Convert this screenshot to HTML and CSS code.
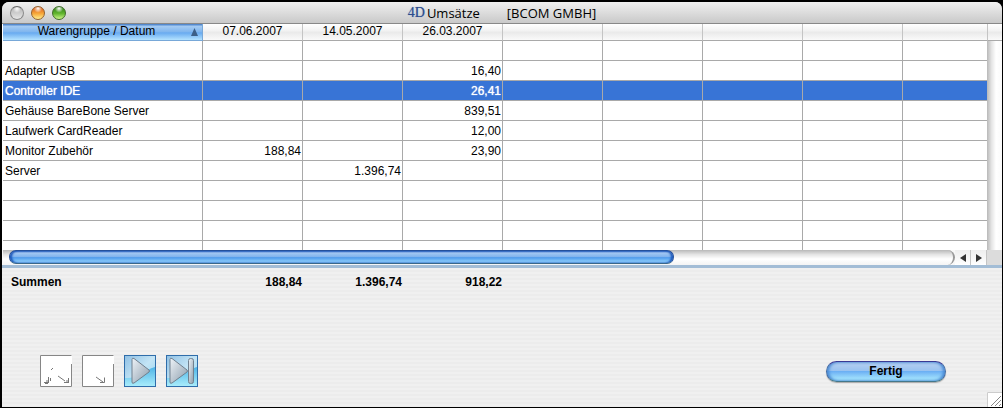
FILE: index.html
```
<!DOCTYPE html>
<html lang="de">

<head>
    <meta charset="UTF-8">
    <meta name="viewport" content="width=device-width, initial-scale=1.0">
    <title>Umsätze [BCOM GMBH]</title>
    <link rel="stylesheet" href="styles.css">
</head>

<body>
    <div class="window">
        <header class="titlebar">
            <div class="lights">
                <button type="button" class="light" aria-label="Schließen"></button>
                <button type="button" class="light orange" aria-label="Minimieren"></button>
                <button type="button" class="light green" aria-label="Maximieren"></button>
            </div>
            <h1>
                <span class="logo">4D</span>
                <span>Umsätze</span>
                <span class="customer">[BCOM GMBH]</span>
            </h1>
        </header>

        <div class="list">
            <div class="rows">
                <table class="grid">
                    <colgroup>
                        <col class="group"><col class="day"><col class="day"><col class="day"><col class="day">
                        <col class="day"><col class="day"><col class="day"><col>
                    </colgroup>
                    <thead>
                        <tr>
                            <th class="sorted" aria-sort="ascending">Warengruppe / Datum
                                <svg class="arrow" width="7" height="8" viewBox="0 0 7 8"><path d="M3.5 0L7 8H0z" fill="#3c5f87"/></svg>
                            </th>
                            <th>07.06.2007</th>
                            <th>14.05.2007</th>
                            <th>26.03.2007</th>
                            <th></th><th></th><th></th><th></th><th></th>
                        </tr>
                    </thead>
                    <tbody id="salesRows"></tbody>
                </table>
            </div>
            <div class="vscroll">
                <div class="vscroll-head"></div>
                <div class="vscroll-track"></div>
            </div>
        </div>

        <div class="hscroll">
            <div class="track"><div class="thumb"></div></div>
            <button type="button" class="step" aria-label="Nach links"><svg width="6" height="8" viewBox="0 0 6 8"><path d="M6 0v8L0 4z" fill="#333"/></svg></button>
            <button type="button" class="step" aria-label="Nach rechts"><svg width="6" height="8" viewBox="0 0 6 8"><path d="M0 0v8l6-4z" fill="#333"/></svg></button>
            <div class="corner"></div>
        </div>

        <footer class="panel">
            <table class="sums">
                <colgroup>
                    <col class="group"><col class="day"><col class="day"><col class="day"><col>
                </colgroup>
                <tr>
                    <th>Summen</th>
                    <td>188,84</td>
                    <td>1.396,74</td>
                    <td>918,22</td>
                    <td></td>
                </tr>
            </table>
            <div class="actions">
                <button type="button" class="nav off" aria-label="Erster">
                    <svg width="32" height="32" viewBox="0 0 32 32">
                        <path d="M.5 31.5V.5h31M.5 31.5h31V9" fill="none" stroke="#868686"/>
                        <path d="M11 15l2-2M18 21l7 5M24 27.5h4M28.500 23v5M26 26h2M8.500 22v5M10.500 23v3M4 27.500h5M6 26h3M5 28.500h3" fill="none" stroke="#777"/>
                    </svg>
                </button>
                <button type="button" class="nav off" aria-label="Zurück">
                    <svg width="32" height="32" viewBox="0 0 32 32">
                        <path d="M.5 31.5V.5h31M.5 31.5h31V9" fill="none" stroke="#868686"/>
                        <path d="M14 22l7 5M22.500 22.500v5H18" fill="none" stroke="#777"/>
                    </svg>
                </button>
                <button type="button" class="nav" aria-label="Weiter">
                    <svg width="32" height="32" viewBox="0 0 32 32">
                        <defs>
                            <linearGradient id="sky" x1="0" y1="0" x2="1" y2="1">
                                <stop offset="0" stop-color="#8fc0e4"/>
                                <stop offset=".5" stop-color="#c3e4f5"/>
                                <stop offset="1" stop-color="#8fd4f2"/>
                            </linearGradient>
                            <linearGradient id="wave" x1="0" y1="0" x2="0" y2="1">
                                <stop offset="0" stop-color="#4fb4e6"/>
                                <stop offset="1" stop-color="#a8ecfb"/>
                            </linearGradient>
                            <linearGradient id="steel" x1="0" y1="0" x2="1" y2="1">
                                <stop offset="0" stop-color="#eef3f8"/>
                                <stop offset="1" stop-color="#8b9cab"/>
                            </linearGradient>
                        </defs>
                        <rect x=".5" y=".5" width="31" height="31" fill="url(#sky)"/>
                        <path d="M1 23C14 24 20 15 31 12v19H1z" fill="url(#wave)"/>
                        <rect x=".5" y=".5" width="31" height="31" fill="none" stroke="#2f6daa"/>
                        <path d="M8 4.500Q8 2.500 10 3.500L25 15q1 1 0 2L10 28Q8 29 8 27z" fill="url(#steel)" stroke="#71808e"/>
                    </svg>
                </button>
                <button type="button" class="nav" aria-label="Letzter">
                    <svg width="32" height="32" viewBox="0 0 32 32">
                        <rect x=".5" y=".5" width="31" height="31" fill="url(#sky)"/>
                        <path d="M1 23C14 24 20 15 31 12v19H1z" fill="url(#wave)"/>
                        <rect x=".5" y=".5" width="31" height="31" fill="none" stroke="#2f6daa"/>
                        <path d="M4 4.500Q4 2.500 6 3.500L21 15q1 1 0 2L6 28Q4 29 4 27z" fill="url(#steel)" stroke="#71808e"/>
                        <rect x="22.500" y="3.500" width="5" height="25" rx="2" fill="url(#steel)" stroke="#71808e"/>
                    </svg>
                </button>
                <button type="button" class="done">Fertig</button>
            </div>
            <svg class="grip" width="15" height="15" viewBox="0 0 15 15">
                <path d="M0 0h15v15H0z" fill="#fff"/>
                <path d="M.5 15V.5H15" fill="none" stroke="#ccc"/>
                <path d="M4 14L14 4M8 14l6-6M12 14l2-2" stroke="#888"/>
            </svg>
        </footer>
    </div>

    <script>
        const sales = [
            ['', '', '', ''],
            ['Adapter USB', '', '', '16,40'],
            ['Controller IDE', '', '', '26,41'],
            ['Gehäuse BareBone Server', '', '', '839,51'],
            ['Laufwerk CardReader', '', '', '12,00'],
            ['Monitor Zubehör', '188,84', '', '23,90'],
            ['Server', '', '1.396,74', '']
        ];
        const rowCount = 11;
        const columnCount = 9;
        const selectedRow = 2;

        let html = '';
        for (let r = 0; r < rowCount; r++) {
            const row = sales[r] || [];
            html += r === selectedRow ? '<tr class="selected">' : '<tr>';
            for (let c = 0; c < columnCount; c++) {
                html += `<td>${row[c] || ''}</td>`;
            }
            html += '</tr>';
        }
        document.querySelector('#salesRows').innerHTML = html;
    </script>
</body>

</html>
```
FILE: styles.css
```
* {
    box-sizing: border-box;
}

body {
    margin: 0;
    padding: 2px 1px 1px 2px;
    height: 100vh;
    background: #000;
    color: #000;
    font: 12px/16px "Liberation Sans", Arial, sans-serif;
}

button {
    margin: 0;
    padding: 0;
    border: 0;
    background: none;
    font: inherit;
}

svg {
    display: block;
}

.window {
    display: flex;
    flex-direction: column;
    height: 100%;
    overflow: hidden;
    border-radius: 7px 7px 0 0;
    background: #ececec;
}

/* title bar */
.titlebar {
    display: grid;
    grid-template-columns: 1fr auto 1fr;
    align-items: center;
    height: 22px;
    flex: none;
    border-bottom: 1px solid #888;
    background: linear-gradient(#f0f0f0, #c9c9c9);
}

.lights {
    display: flex;
    gap: 7px;
    padding-left: 8px;
}

.light {
    width: 14px;
    height: 14px;
    border: 1px solid #8a8a8a;
    border-top-color: #666;
    border-radius: 50%;
    background: radial-gradient(circle at 50% 15%, #fff, transparent 35%), linear-gradient(#b4b4b4, #e6e6e6);
}

.light.orange {
    border-color: #93602c;
    background: radial-gradient(circle at 50% 12%, #fff, transparent 35%), linear-gradient(#d9581d, #f7a83a 55%, #ffee8e);
}

.light.green {
    border-color: #3e6b28;
    background: radial-gradient(circle at 50% 12%, #fff, transparent 35%), linear-gradient(#2c7d16, #63b62f 55%, #cdf58b);
}

h1 {
    display: flex;
    align-items: center;
    margin: 0;
    font: 13px/20px "Open Sans", "Noto Sans", sans-serif;
    white-space: nowrap;
}

.logo {
    margin-right: 2px;
    color: #2c4c8c;
    font: 14px/20px "Liberation Serif", serif;
    text-shadow: 0 0 1px #6f8cc4;
}

.customer {
    margin-left: 27px;
}

/* sales list */
.list {
    display: flex;
    flex: 1;
    min-height: 0;
    overflow: hidden;
    padding-left: 1px;
    background: #fff;
}

.rows {
    flex: 1;
    min-width: 0;
    overflow: hidden;
}

table {
    width: 100%;
    table-layout: fixed;
    border-collapse: separate;
    border-spacing: 0;
}

.group {
    width: 200px;
}

.day {
    width: 100px;
}

.grid th,
.grid td {
    border-right: 1px solid #a9a9a9;
    border-bottom: 1px solid #a9a9a9;
    white-space: nowrap;
}

.grid th:last-child,
.grid td:last-child {
    border-right: 0;
}

.grid th {
    position: relative;
    height: 17px;
    padding: 0 12px 2px 0;
    background: linear-gradient(#fff, #f1f1f1 45%, #e9e9e9 50%, #fafafa);
    font-weight: normal;
    line-height: 14px;
    text-align: center;
}

.grid th:not(.sorted) {
    border-right-color: #c4c4c4;
    padding-right: 0;
}

.grid th.sorted {
    border-color: #78a8d8;
    background: linear-gradient(#3f78c4, #a3caf2 15%, #7fb5ee 50%, #68aaf0 55%, #b4e3ff);
}

.arrow {
    position: absolute;
    right: 4px;
    top: 4px;
}

.grid td {
    height: 20px;
    padding: 0 1px 0 2px;
    line-height: 18px;
    text-align: right;
}

.grid td:first-child {
    text-align: left;
}

.grid .selected td {
    background: #3874d6;
    color: #fff;
    text-shadow: 0 0 1px #fff;
}

.vscroll {
    display: flex;
    flex-direction: column;
    width: 15px;
}

.vscroll-head {
    height: 17px;
    border-left: 1px solid #c4c4c4;
    border-bottom: 1px solid #a9a9a9;
    background: linear-gradient(#fff, #f1f1f1 45%, #e9e9e9 50%, #fafafa);
}

.vscroll-track {
    flex: 1;
    background: linear-gradient(90deg, #b8b8b8, #e4e4e4 30%, #fff 60%, #fafafa);
}

.hscroll {
    display: flex;
    flex: none;
    height: 15px;
    padding-left: 1px;
    background: #f8f8f8;
}

.track {
    flex: 1;
    padding-left: 6px;
    border-right: 2px solid #999;
    border-radius: 0 8px 8px 0;
    background: linear-gradient(#b8b8b8, #e4e4e4 30%, #fff 60%, #f4f4f4);
}

.thumb {
    width: calc(70% + 4px);
    height: 14px;
    border: 1px solid #24509c;
    border-bottom-color: #3a6788;
    border-radius: 7px;
    background: linear-gradient(#3a6cc4, #a4c8f2 15%, #7eb2ee 50%, #4f9bec 55%, #9edcff);
    box-shadow: inset 2px 0 2px #1d58bc, inset -2px 0 2px #1d58bc;
}

.step {
    display: flex;
    align-items: center;
    justify-content: center;
    width: 16px;
    border-right: 1px solid #c4c4c4;
    background: linear-gradient(#eee, #fff);
}

.corner {
    width: 15px;
    background: #dcdcdc;
}

/* totals and buttons */
.panel {
    position: relative;
    flex: none;
    padding: 6px 0 20px 1px;
    border-top: 3px solid #a3bdd6;
    background: repeating-linear-gradient(#f0f0f0 0 2px, #ececec 2px 4px);
}

.sums th,
.sums td {
    padding: 0 1px 0 8px;
    font-weight: bold;
    text-align: right;
}

.sums th {
    text-align: left;
}

.actions {
    display: flex;
    align-items: center;
    gap: 10px;
    margin-top: 65px;
    padding: 0 56px 0 37px;
}

.nav {
    width: 32px;
    height: 32px;
}

.nav.off {
    background: #fff;
}

.done {
    width: 120px;
    height: 21px;
    margin-left: auto;
    border: 1px solid #3f6aa4;
    border-top-color: #3a3a94;
    border-bottom-color: #44788c;
    border-radius: 11px;
    background: linear-gradient(#b9d0f0, #9ac3f0 45%, #6cb0f4 50%, #b2f0ff);
    box-shadow: inset 2px 0 3px #4a8ad4, inset -2px 0 3px #4a8ad4, 0 1px 1px #aaa;
    font-weight: bold;
}

.grip {
    position: absolute;
    right: 0;
    bottom: 0;
}
```
